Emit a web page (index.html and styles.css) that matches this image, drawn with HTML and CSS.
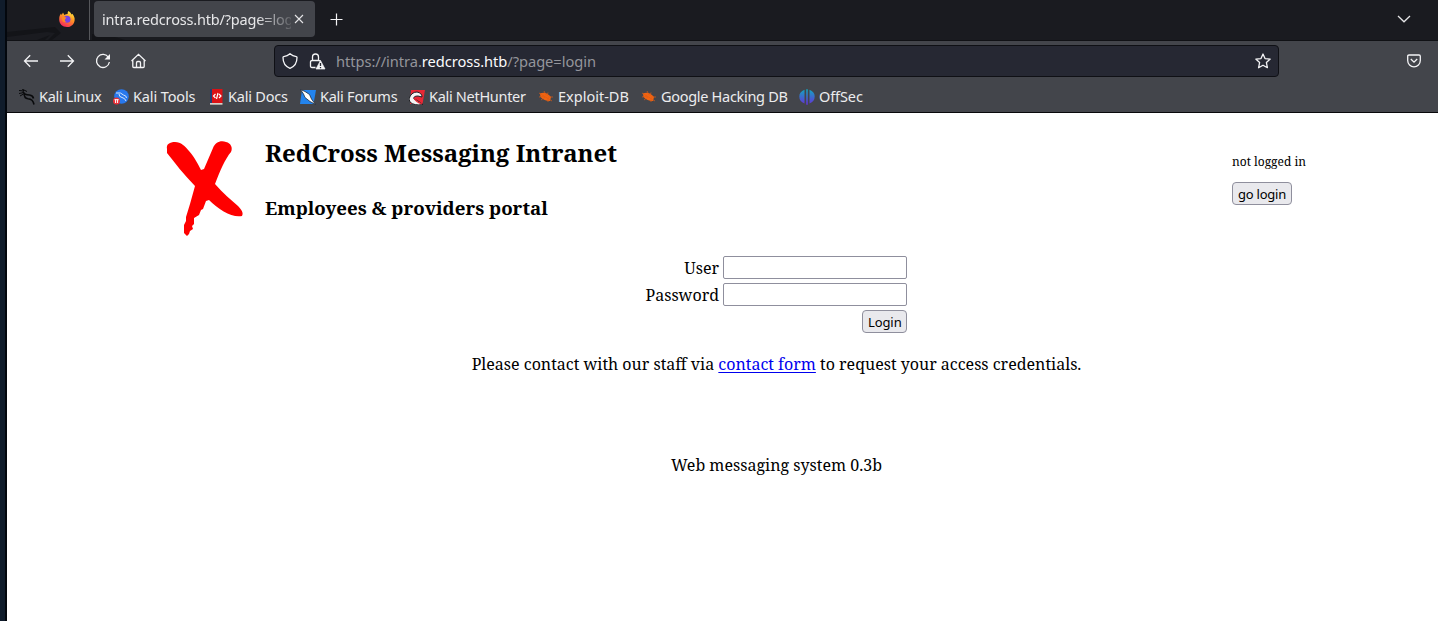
FILE: index.html
```html
<!DOCTYPE html>
<html lang="en">
<head>
<meta charset="utf-8">
<title>intra.redcross.htb</title>
<link rel="stylesheet" href="styles.css">
</head>
<body>
<div class="desktop-edge"></div>
<div class="browser">
  <div class="tabbar">
    <svg class="wallpaper" width="130" height="40" viewBox="0 0 130 40"><path d="M0 32L48 27L54 33L45 40H41L48 33L40 32L0 37M30 40L43 35L38 40M85 34Q104 35 118 40H85Z" fill="#131418"/></svg>
    <div class="pinned">
      <svg width="16" height="16" viewBox="0 0 16 16"><defs><linearGradient id="fx" x1=".8" y1="0" x2=".3" y2="1"><stop offset="0" stop-color="#fff044"/><stop offset=".45" stop-color="#ff9422"/><stop offset="1" stop-color="#f6245f"/></linearGradient></defs><path d="M9.4 0C11 1 12 2 12.5 3.4L13.3 2.8C15 5 16 7 15.6 9.4C15 13.5 12 16 8 16C3.500 16 .2 13 .2 8.500C.2 6 .8 4 2 2.600L2.700 4L4 1.600L5.300 4C6.500 3.200 8 3 8.700 3C8.500 2 8.800.8 9.400 0Z" fill="url(#fx)"/><circle cx="8" cy="8.200" r="3.500" fill="#7542e5"/><path d="M3 5.500L7.500 6.500L6.300 8C5.500 9 5.700 10.500 7.500 11C5 12 3 10 3 8Z" fill="#ff8a22"/></svg>
    </div>
    <div class="tab">
      <span class="tab-title">intra.redcross.htb/?page=log</span>
      <svg width="10" height="10" viewBox="0 0 10 10"><path d="M1 1L9 9M9 1L1 9" stroke="#e5e5e7" stroke-width="1.100"/></svg>
    </div>
    <svg class="newtab" width="13" height="13" viewBox="0 0 13 13"><path d="M6.500 .5V12.500M.5 6.500H12.500" stroke="#f4f4f6" stroke-width="1.200"/></svg>
    <svg class="alltabs" width="14" height="8" viewBox="0 0 14 8"><path d="M1 1L7 6.800L13 1" fill="none" stroke="#e5e5e7" stroke-width="1.300"/></svg>
  </div>
  <div class="navbar">
    <div class="navicons">
      <svg width="16" height="16" viewBox="0 0 16 16"><path d="M15 8H1.500M7.200 2.300L1.500 8L7.200 13.700"/></svg>
      <svg width="16" height="16" viewBox="0 0 16 16"><path d="M1 8H14.500M8.800 2.300L14.500 8L8.800 13.700"/></svg>
      <svg width="16" height="16" viewBox="0 0 16 16"><path d="M13.500 4.500A6.500 6.500 0 1 0 14.400 9"/><path d="M15 1V6.500H9.500Z" fill="#f4f4f6" stroke="none"/></svg>
      <svg width="16" height="16" viewBox="0 0 16 16"><path d="M.5 8L7.500 1.300L14.500 8M1.800 7V13.500Q1.800 14.500 2.800 14.500H12.200Q13.200 14.500 13.200 13.500V7M5.500 14V9.800Q5.500 8.500 6.700 8.500H8.300Q9.500 8.500 9.500 9.800V14"/></svg>
    </div>
    <div class="urlbar">
      <svg width="16" height="16" viewBox="0 0 16 16"><path d="M8 .8C10 2.600 12 3.300 14.300 3.600Q15 3.800 15 4.500C15 10 12.500 13.600 8 15.300C3.500 13.600 1 10 1 4.500Q1 3.800 1.700 3.600C4 3.300 6 2.600 8 .8Z"/></svg>
      <svg class="lock" width="17" height="17" viewBox="0 0 17 17"><path d="M6.500 14.500H3Q1.500 14.500 1.500 13V9Q1.500 7.500 3 7.500H10Q11.200 7.500 11.300 8.500M3.500 7V4A3 3 0 0 1 9.500 4V7"/><path d="M11.500 7.500L16 16H7Z" fill="#f4f4f6" stroke="#f4f4f6" stroke-width=".7"/><path d="M11.500 10V13M11.500 14V15.200" stroke="#262833" stroke-width="1.300"/></svg>
      <span class="url">https://intra.<b>redcross.htb</b>/?page=login</span>
      <svg class="star" width="16" height="16" viewBox="0 0 16 16"><path d="M8 1L10 5.600L15.200 6.100L11.400 9.600L12.400 14.700L8 12.200L3.600 14.700L4.600 9.600L.8 6.100L6 5.600Z" stroke-linejoin="round"/></svg>
    </div>
    <svg class="pocket" width="14" height="14" viewBox="0 0 14 14"><path d="M2 1H12Q13.300 1 13.300 2.300V6.500A6.300 6.300 0 0 1 .7 6.500V2.300Q.7 1 2 1ZM3.800 5L7 8.200L10.200 5"/></svg>
  </div>
  <div class="bookmarks">
    <div class="bm b1"><svg width="16" height="16" viewBox="0 0 16 16"><path d="M0 1.500L5 2L3.500 .3L8 2.500M0 4.500L5 3.500M1 7L4.500 5" fill="none" stroke="#090a0c" stroke-width="1"/><path d="M4 2.500Q5 6 10.500 6Q14 6.500 14.500 9.500M5 3.500Q5 9.500 9 9.800Q14 10 15 15.500" fill="none" stroke="#090a0c" stroke-width="1.600"/></svg><span>Kali Linux</span></div>
    <div class="bm b2"><svg width="16" height="16" viewBox="0 0 16 16"><circle cx="8.500" cy="7.500" r="7.300" fill="#2878ed"/><path d="M3 4Q8 3 10.500 6Q13.500 6.500 13.500 9M6 5Q6 8 9 8.500Q12 9 13 12" fill="none" stroke="#d5e7ff"/><circle cx="3.500" cy="12" r="3.500" fill="#e92f37"/><path d="M2.600 10.500V14M4.600 10.500V14M1.500 10.700H5.700" stroke="#fff"/></svg><span>Kali Tools</span></div>
    <div class="bm b3"><svg width="13" height="16" viewBox="0 0 13 16"><path d="M0 0H12.500V14H0Z" fill="#dc1115"/><path d="M0 0H2V15H0Z" fill="#243e70"/><path d="M0 14H12.500V15.700H0Z" fill="#d8cfc8"/><path d="M5.500 5L3.500 7L5.500 9M9 5L11 7L9 9M8 4L6.500 10" fill="none" stroke="#fff" stroke-width="1.200"/></svg><span>Kali Docs</span></div>
    <div class="bm b4"><svg width="16" height="16" viewBox="0 0 16 16"><path d="M2 1H16L13.500 15H0Z" fill="#2384ee"/><path d="M.5 .5L5 2.500L9.500 5.500L11.500 10L15.500 15.500L10 12.500L5 8.500L3.500 5Z" fill="#fff" stroke="#222b38" stroke-width=".8"/></svg><span>Kali Forums</span></div>
    <div class="bm b5"><svg width="16" height="16" viewBox="0 0 16 16"><path d="M2 1H16L13.500 15H1Z" fill="#e92835"/><path d="M0 10Q2 3 8 3Q13 4 13 8L9 7Q4 7 5 10Q8 11 14 15.500Q5 17 1 13Z" fill="#f4f4f4" stroke="#202126"/><path d="M5 9Q7 13 13 15" fill="none" stroke="#e92835" stroke-width="1.200"/></svg><span>Kali NetHunter</span></div>
    <div class="bm b6"><svg width="16" height="16" viewBox="0 0 16 16"><path d="M2 4.500Q8 2 13 8L12 12Q6 12 2.500 8Z" fill="#f26411"/><path d="M1 4L14 12M1 8L6 7M3 11L7 8M6 2L8 6M10 3.500L9 7M15 8L10 8M10 13V9" stroke="#e05c14" stroke-width=".7"/></svg><span>Exploit-DB</span></div>
    <div class="bm b7"><svg width="16" height="16" viewBox="0 0 16 16"><path d="M2 4.500Q8 2 13 8L12 12Q6 12 2.500 8Z" fill="#f26411"/><path d="M1 4L14 12M1 8L6 7M3 11L7 8M6 2L8 6M10 3.500L9 7M15 8L10 8M10 13V9" stroke="#e05c14" stroke-width=".7"/></svg><span>Google Hacking DB</span></div>
    <div class="bm b8"><svg width="16" height="16" viewBox="0 0 16 16"><defs><linearGradient id="os" x2="0" y2="1"><stop stop-color="#12a6c0"/><stop offset="1" stop-color="#6530d8"/></linearGradient></defs><path d="M5.500 .8V14.500Q.3 12.500 .3 7.500Q.3 3 5.500 .8ZM10.500 .8Q15.700 3 15.700 7.500Q15.700 12.500 10.500 14.500ZM7.200 .3H8.800V15.700H7.200Z" fill="url(#os)"/></svg><span>OffSec</span></div>
  </div>
  <main class="page">
    <header class="masthead">
      <svg class="logo" width="78" height="97" viewBox="0 0 78 97"><path d="M1 9C0 4 4 2 9 2C15 2 19 6 23 11C29 18 32 24 35 30L38 29L47 8C49 3 54 0 60 2C65 3 67 8 65 12C59 19 54 31 49 44C57 53 65 60 72 66C75 69 78 73 76 76C66 78 53 70 43 60L40 61L37 69L35 70L33 75L28 78V84L26 86L27 89L24 91L23 94L21 96L18 93V85L20 81V77L24 64L29 46C18 35 9 23 1 13Z" fill="#f00"/></svg>
      <div class="titles"><h1>RedCross Messaging Intranet</h1><h2>Employees &amp; providers portal</h2></div>
      <div class="session"><span>not logged in</span><button>go login</button></div>
    </header>
    <form class="login">
      <label for="user">User</label><input id="user" type="text">
      <label for="password">Password</label><input id="password" type="password">
      <button type="button">Login</button>
    </form>
    <p class="contact">Please contact with our staff via <a href="#">contact form</a> to request your access credentials.</p>
    <footer>Web messaging system 0.3b</footer>
  </main>
</div>
</body>
</html>
```
FILE: styles.css
```css
* { box-sizing: border-box; }
body { margin: 0; display: flex; height: 621px; overflow: hidden; background: #fff; font: 16px/22px "Noto Serif", "Droid Serif", "DejaVu Serif Condensed", serif; color: #000; }
svg { flex: none; display: block; }
.desktop-edge { width: 7px; flex: none; background: #101c2b; border-right: 2px solid #03070d; }
.browser { width: 1431px; flex: none; }
.tabbar { position: relative; display: flex; height: 41px; background: #1a1b20; border-bottom: 1px solid #101115; font: 14.67px/20px "Noto Sans", sans-serif; color: #e6e6e8; }
.wallpaper { position: absolute; left: 0; top: 0; }
.pinned { position: relative; width: 83px; border-right: 1px solid #56575b; padding: 11px 0 0 52px; }
.tab { position: relative; display: flex; align-items: center; width: 221px; height: 36px; margin: 1px 0 0 4px; padding: 0 11px 0 8px; border-radius: 4px; background: #43454b; gap: 3px; }
.tab-title { width: 189px; white-space: nowrap; font-size: 14.5px; letter-spacing: -.18px; -webkit-mask-image: linear-gradient(to right, #000 155px, transparent 195px); mask-image: linear-gradient(to right, #000 155px, transparent 195px); }
.newtab { margin: 13px 0 0 15px; }
.alltabs { margin: 15px 27px 0 auto; }
.navbar { display: flex; align-items: center; height: 40px; background: #43454b; padding: 0 17px 0 16px; }
.navbar svg { fill: none; stroke: #f4f4f6; stroke-width: 1.3; }
.navicons { display: flex; gap: 20px; width: 251px; }
.urlbar { display: flex; align-items: center; width: 1005px; height: 32px; border: 1px solid #0f1015; border-radius: 4px; background: #262833; padding: 0 7px; font: 14.67px/20px "Noto Sans", sans-serif; letter-spacing: -.05px; color: #94959b; }
.lock { margin-left: 11px; }
.url { margin-left: 10px; }
.url b { font-weight: 400; color: #fbfbfe; }
.star { margin-left: auto; }
.pocket { margin-left: auto; }
.bookmarks { display: flex; height: 32px; background: #43454b; border-bottom: 1px solid #08080b; padding-left: 12px; font: 14.5px/20px "Noto Sans", sans-serif; color: #ececee; }
.bm { display: flex; align-items: center; gap: 4px; white-space: nowrap; flex: none; letter-spacing: -.3px; }
.b1 { width: 94px; } .b2 { width: 97px; letter-spacing: -.12px; } .b3 { width: 90px; gap: 5px; letter-spacing: -.2px; } .b4 { width: 109px; letter-spacing: -.25px; }
.b5 { width: 129px; } .b6 { width: 103px; letter-spacing: 0; } .b7 { width: 158px; } .b8 { letter-spacing: -.1px; }
.bookmarks span { padding-bottom: 1px; }
.page { background: #fff; height: 508px; }
.masthead { display: flex; padding: 27px 0 0 159px; height: 140px; }
.titles { width: 967px; margin-left: 21px; white-space: nowrap; }
h1 { font-size: 24px; line-height: 33px; margin: -4px 0 0; }
h2 { font-size: 18.72px; line-height: 26px; margin: 26px 0 0; }
.session { display: flex; flex-direction: column; align-items: flex-start; padding-top: 14px; font-size: 12px; line-height: 16px; }
button { height: 23px; border: 1px solid #8f8f9d; border-radius: 4px; background: #e9e9ed; color: #000; font: 13px/18px "Noto Sans", sans-serif; letter-spacing: -.25px; padding: 1px 5px; }
.session button { margin-top: 12px; width: 60px; white-space: nowrap; }
.login { display: grid; grid-template-columns: 74px 184px; justify-content: center; gap: 4px; margin-left: 107px; padding: 3px 0 0; text-align: right; }
.login label { line-height: 24px; height: 23px; }
.login input { width: 184px; height: 23px; border: 1px solid #8f8f9d; border-radius: 2px; background: #fff; outline: 0; }
.login button { grid-column: 2; justify-self: end; width: 45px; letter-spacing: -.1px; }
.contact { margin: 20px 0 0 108px; text-align: center; width: 1323px; }
.contact a { color: #00e; text-underline-offset: 2px; }
.contact, footer { white-space: nowrap; }
footer { margin: 79px 0 0 108px; text-align: center; width: 1323px; }
```
